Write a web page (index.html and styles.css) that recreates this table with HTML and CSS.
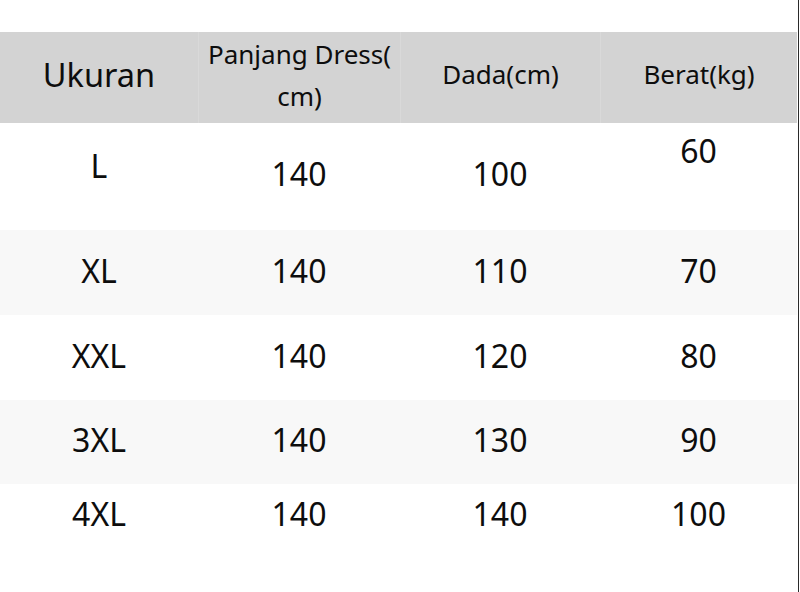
FILE: index.html
```html
<!DOCTYPE html>
<html>
<head>
<meta charset="utf-8">
<link rel="stylesheet" href="styles.css">
</head>
<body>
<div class="page">
  <div class="table">
    <div class="row head">
      <div class="cell h-size">Ukuran</div>
      <div class="cell h-two">Panjang Dress(<br>cm)</div>
      <div class="cell h-std">Dada(cm)</div>
      <div class="cell h-std">Berat(kg)</div>
    </div>
    <div class="row r1">
      <div class="cell up-l">L</div>
      <div class="cell">140</div>
      <div class="cell">100</div>
      <div class="cell up-60">60</div>
    </div>
    <div class="row r2 alt">
      <div class="cell">XL</div>
      <div class="cell">140</div>
      <div class="cell">110</div>
      <div class="cell">70</div>
    </div>
    <div class="row r3">
      <div class="cell">XXL</div>
      <div class="cell">140</div>
      <div class="cell">120</div>
      <div class="cell">80</div>
    </div>
    <div class="row r4 alt">
      <div class="cell">3XL</div>
      <div class="cell">140</div>
      <div class="cell">130</div>
      <div class="cell">90</div>
    </div>
    <div class="row r5">
      <div class="cell">4XL</div>
      <div class="cell">140</div>
      <div class="cell">140</div>
      <div class="cell">100</div>
    </div>
  </div>
</div>
</body>
</html>
```
FILE: styles.css
```css
html, body {
  margin: 0;
  padding: 0;
  background: #ffffff;
}
.page {
  width: 799px;
  height: 592px;
  border-right: 1px solid #2a2a2a;
  padding-top: 32px;
  box-sizing: border-box;
  font-family: "Noto Sans", "Open Sans", sans-serif;
  color: #0d0d0d;
  overflow: hidden;
}
.row {
  display: grid;
  grid-template-columns: 198px 202px 200px 197px;
  width: 797px;
}
.cell {
  display: flex;
  align-items: center;
  justify-content: center;
  text-align: center;
  font-size: 32px;
  line-height: 40px;
  padding-bottom: 4px;
  box-sizing: border-box;
}
.head {
  height: 91px;
  background: #d3d3d3;
}
.head .cell {
  border-left: 1px solid #d9d9d9;
}
.head .cell:first-child {
  border-left: none;
}
.h-size {
  font-size: 32.5px;
  padding-bottom: 6px;
}
.h-two {
  font-size: 26px;
  line-height: 42px;
  padding-bottom: 6px;
}
.h-std {
  font-size: 26px;
  padding-bottom: 8px;
}
.r1 { height: 107px; }
.r2 { height: 85px; }
.r3 { height: 85px; }
.r4 { height: 84px; }
.r5 { height: 108px; }
.alt { background: #f8f8f8; }
.r1 .cell { padding-bottom: 6px; }
.r1 .up-l { padding-bottom: 22px; }
.r1 .up-60 { padding-bottom: 52px; }
.r5 .cell { padding-bottom: 48px; }
```
